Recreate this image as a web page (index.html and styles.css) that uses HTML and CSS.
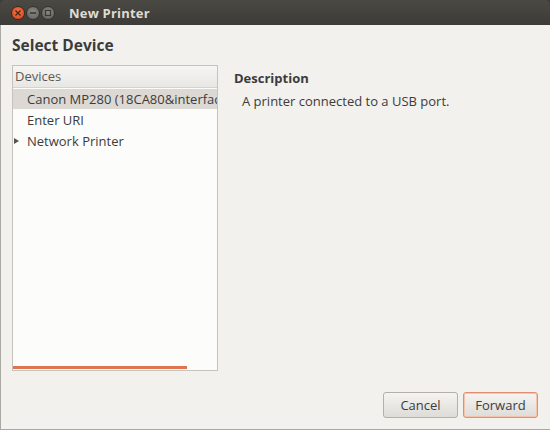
FILE: index.html
```html
<!DOCTYPE html>
<html>
<head>
<meta charset="utf-8">
<link rel="stylesheet" href="styles.css">
</head>
<body>
<div class="window">
  <div class="titlebar">
    <div class="controls">
      <span class="ctl close"><svg width="8" height="8" viewBox="0 0 8 8"><path d="M1.5 1.5L6.5 6.5M6.5 1.5L1.5 6.5" stroke="#3a2a20" stroke-width="1.4"/></svg></span>
      <span class="ctl min"><svg width="8" height="8" viewBox="0 0 8 8"><path d="M1 4H7" stroke="#3a3935" stroke-width="1.6"/></svg></span>
      <span class="ctl max"><svg width="8" height="8" viewBox="0 0 8 8"><rect x="1.5" y="1.5" width="5" height="5" fill="none" stroke="#3a3935" stroke-width="1.2"/></svg></span>
    </div>
    <div class="title">New Printer</div>
  </div>
  <div class="body">
    <h1 class="heading">Select Device</h1>
    <div class="content">
      <div class="list">
        <div class="list-header">Devices</div>
        <div class="rows">
          <div class="row selected">Canon MP280 (18CA80&amp;interface=1)</div>
          <div class="row">Enter URI</div>
          <div class="row expander"><span class="arrow"></span>Network Printer</div>
        </div>
        <div class="hscroll"><div class="hthumb"></div></div>
      </div>
      <div class="desc">
        <div class="desc-title">Description</div>
        <div class="desc-text">A printer connected to a USB port.</div>
      </div>
    </div>
    <div class="buttons">
      <button class="btn">Cancel</button>
      <button class="btn default">Forward</button>
    </div>
  </div>
</div>
</body>
</html>
```

FILE: styles.css
```css
* { box-sizing: border-box; }
html, body { margin: 0; padding: 0; background: #f2f1ed; }
body { font-family: "Open Sans", "DejaVu Sans", sans-serif; font-size: 13px; color: #3c3c3c; }
.window { width: 550px; height: 430px; display: flex; flex-direction: column; background: #3c3b37; }
.titlebar {
  height: 25px; display: flex; align-items: center;
  background: linear-gradient(#4a4944, #3c3b37);
  border-radius: 5px 5px 0 0;
  padding-left: 11px;
}
.controls { display: flex; gap: 1px; }
.ctl {
  width: 14px; height: 14px; border-radius: 50%;
  display: flex; align-items: center; justify-content: center;
  background: radial-gradient(circle at 50% 40%, #8a8983, #5f5e59);
  border: 1px solid #34332f;
}
.ctl.close { background: radial-gradient(circle at 50% 40%, #f7753f, #d9401a); border-color: #3a2a20; }
.title { margin-left: 14px; color: #dfdbd2; font-weight: bold; font-size: 13px; letter-spacing: 0.2px; }
.body {
  flex: 1; background: #f2f1ed; display: flex; flex-direction: column;
  border-left: 1px solid #a9a8a3; border-bottom: 1px solid #a9a8a3;
  padding: 0 12px 0 11px;
}
.heading { margin: 10px 0 0 0; font-size: 15.5px; font-weight: bold; color: #3c3c3c; height: 20px; line-height: 20px; }
.content { display: flex; margin-top: 10px; height: 306px; }
.list {
  width: 206px; background: #fcfcfb; border: 1px solid #c6c3bd;
  display: flex; flex-direction: column;
}
.list-header {
  height: 22px; line-height: 20px; padding-left: 2px; color: #5a5a55;
  background: linear-gradient(#f6f5f3, #e9e7e3);
  border-bottom: 1px solid #d6d3ce;
}
.rows { flex: 1; overflow: hidden; }
.row { height: 21px; line-height: 21px; padding-left: 14px; white-space: nowrap; overflow: hidden; color: #3c3c3c; }
.row.selected { background: #dcd9d4; height: 20px; line-height: 21px; margin-top: 1px; margin-bottom: 1px; }
.expander { position: relative; }
.arrow {
  position: absolute; left: 1px; top: 7px; width: 0; height: 0;
  border-left: 5px solid #55554f; border-top: 3.5px solid transparent; border-bottom: 3.5px solid transparent;
}
.hscroll { height: 4px; }
.hthumb { width: 174px; height: 3px; background: #dd7552; }
.desc { margin-left: 16px; padding-top: 3px; }
.desc-title { font-weight: bold; height: 20px; line-height: 20px; color: #3c3c3c; }
.desc-text { margin-left: 8px; margin-top: 4px; line-height: 18px; }
.buttons { display: flex; justify-content: flex-end; gap: 5px; margin-top: 21px; }
.btn {
  width: 75px; height: 26px; font-family: inherit; font-size: 13px; color: #3c3c3c;
  border: 1px solid #b3b0aa; border-radius: 3px;
  background: linear-gradient(#f5f4f2, #dedcd7);
  padding: 0;
}
.btn.default { border: 1px solid #e09070; box-shadow: inset 0 0 0 1px #f4c4ac; }
```
